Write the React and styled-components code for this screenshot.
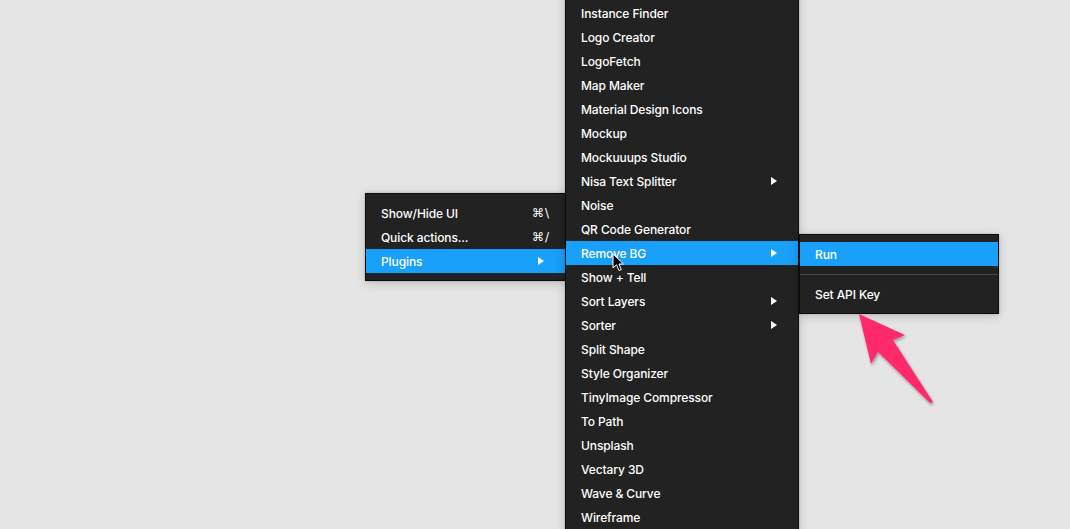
import React from "react";
import styled, { createGlobalStyle } from "styled-components";

const Global = createGlobalStyle`
  html, body { margin: 0; padding: 0; }
  body {
    background: #e5e5e5;
    font-family: Inter, "Noto Sans", "Liberation Sans", sans-serif;
    overflow: hidden;
  }
`;

const Canvas = styled.div`
  position: relative;
  width: 1070px;
  height: 529px;
  background: #e5e5e5;
  overflow: hidden;
`;

const Menu = styled.div`
  position: absolute;
  left: ${(p) => p.$left}px;
  top: ${(p) => p.$top}px;
  width: ${(p) => p.$width}px;
  box-sizing: border-box;
  padding: 7px 0;
  background: #222222;
  border: 1px solid #0c0c0c;
  box-shadow: 0 2px 10px rgba(0, 0, 0, 0.18), 0 0 2px rgba(0, 0, 0, 0.2);
  z-index: ${(p) => p.$z || 1};
`;

const Item = styled.div`
  display: flex;
  align-items: center;
  height: 24px;
  padding: 0 20px 0 15px;
  color: #ffffff;
  font-size: 12px;
  font-weight: 500;
  letter-spacing: -0.1px;
  background: ${(p) => (p.$active ? "#18a0fb" : "transparent")};
  white-space: nowrap;
`;

const Label = styled.span`
  flex: 1;
`;

const Shortcut = styled.span`
  font-size: 12px;
  color: #ffffff;
  margin-right: -5px;
  font-family: "DejaVu Sans", Inter, sans-serif;
  letter-spacing: 1px;
`;

const Caret = styled.span`
  width: 0;
  height: 0;
  border-top: 4px solid transparent;
  border-bottom: 4px solid transparent;
  border-left: 6px solid #ffffff;
  margin-right: 1px;
`;

const Separator = styled.div`
  height: 1px;
  background: #444444;
  margin: 8px 0 7px;
`;

const Overlay = styled.svg`
  position: absolute;
  left: 0;
  top: 0;
  z-index: 10;
  pointer-events: none;
`;

const mainItems = [
  ["Instance Finder"],
  ["Logo Creator"],
  ["LogoFetch"],
  ["Map Maker"],
  ["Material Design Icons"],
  ["Mockup"],
  ["Mockuuups Studio"],
  ["Nisa Text Splitter", true],
  ["Noise"],
  ["QR Code Generator"],
  ["Remove BG", true, true],
  ["Show + Tell"],
  ["Sort Layers", true],
  ["Sorter", true],
  ["Split Shape"],
  ["Style Organizer"],
  ["TinyImage Compressor"],
  ["To Path"],
  ["Unsplash"],
  ["Vectary 3D"],
  ["Wave & Curve"],
  ["Wireframe"],
];

export default function App() {
  return (
    <Canvas>
      <Global />
      <Menu $left={365} $top={193} $width={201} $z={1}>
        <Item>
          <Label>Show/Hide UI</Label>
          <Shortcut>⌘\</Shortcut>
        </Item>
        <Item>
          <Label>Quick actions...</Label>
          <Shortcut>⌘/</Shortcut>
        </Item>
        <Item $active>
          <Label>Plugins</Label>
          <Caret />
        </Item>
      </Menu>

      <Menu $left={565} $top={-7} $width={234} $z={2}>
        {mainItems.map(([name, sub, active]) => (
          <Item key={name} $active={active}>
            <Label>{name}</Label>
            {sub && <Caret />}
          </Item>
        ))}
      </Menu>

      <Menu $left={799} $top={234} $width={200} $z={3}>
        <Item $active>
          <Label>Run</Label>
        </Item>
        <Separator />
        <Item>
          <Label>Set API Key</Label>
        </Item>
      </Menu>

      <Overlay width="1070" height="529" viewBox="0 0 1070 529">
        <defs>
          <filter id="sh" x="-20%" y="-20%" width="140%" height="140%">
            <feDropShadow dx="1" dy="2" stdDeviation="1.5" floodColor="#000" floodOpacity="0.35" />
          </filter>
        </defs>
        <polygon
          points="859,314 905,335 893,340 933,402 930,403 878,352 871,364"
          fill="#fe2c6c"
          filter="url(#sh)"
        />
        <path
          d="M613 254 L613 268 L616.5 264.8 L619 270.5 L621.3 269.5 L618.9 264 L623.5 264 Z"
          fill="#000"
          stroke="#fff"
          strokeWidth="1"
          strokeLinejoin="round"
        />
      </Overlay>
    </Canvas>
  );
}
